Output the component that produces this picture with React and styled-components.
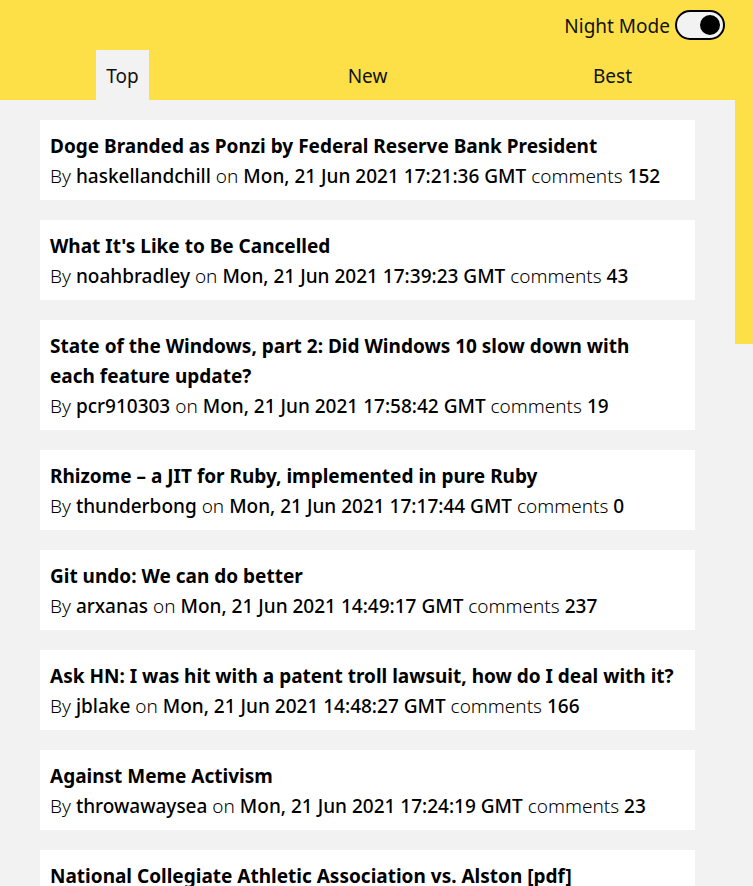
import React, { useState } from "react";
import styled, { createGlobalStyle } from "styled-components";

const stories = [
  { title: "Doge Branded as Ponzi by Federal Reserve Bank President", by: "haskellandchill", time: "Mon, 21 Jun 2021 17:21:36 GMT", comments: 152 },
  { title: "What It's Like to Be Cancelled", by: "noahbradley", time: "Mon, 21 Jun 2021 17:39:23 GMT", comments: 43 },
  { title: "State of the Windows, part 2: Did Windows 10 slow down with each feature update?", by: "pcr910303", time: "Mon, 21 Jun 2021 17:58:42 GMT", comments: 19 },
  { title: "Rhizome – a JIT for Ruby, implemented in pure Ruby", by: "thunderbong", time: "Mon, 21 Jun 2021 17:17:44 GMT", comments: 0 },
  { title: "Git undo: We can do better", by: "arxanas", time: "Mon, 21 Jun 2021 14:49:17 GMT", comments: 237 },
  { title: "Ask HN: I was hit with a patent troll lawsuit, how do I deal with it?", by: "jblake", time: "Mon, 21 Jun 2021 14:48:27 GMT", comments: 166 },
  { title: "Against Meme Activism", by: "throwawaysea", time: "Mon, 21 Jun 2021 17:24:19 GMT", comments: 23 },
  { title: "National Collegiate Athletic Association vs. Alston [pdf]", by: "luu", time: "Mon, 21 Jun 2021 14:31:05 GMT", comments: 88 },
];

function App() {
  const [night, setNight] = useState(true);
  const [tab, setTab] = useState("Top");

  return (
    <>
      <GlobalStyle />
      <Page>
        <Main>
          <Header>
            <TopBar>
              <ModeLabel>Night Mode</ModeLabel>
              <Toggle $on={night} onClick={() => setNight(!night)}>
                <Knob />
              </Toggle>
            </TopBar>
            <Tabs>
              {["Top", "New", "Best"].map((t) => (
                <TabCell key={t}>
                  <Tab $active={tab === t} onClick={() => setTab(t)}>
                    {t}
                  </Tab>
                </TabCell>
              ))}
            </Tabs>
          </Header>
          <List>
            {stories.map((s, i) => (
              <Card key={i}>
                <Title>{s.title}</Title>
                <Meta>
                  <Label>By</Label> <Value>{s.by}</Value> <Label>on</Label>{" "}
                  <Value>{s.time}</Value> <Label>comments</Label>{" "}
                  <Value>{s.comments}</Value>
                </Meta>
              </Card>
            ))}
          </List>
        </Main>
        {/* scrollbars are hidden in the capture, so the rail is drawn */}
        <Rail>
          <Thumb />
        </Rail>
      </Page>
    </>
  );
}

const GlobalStyle = createGlobalStyle`
  body {
    margin: 0;
    background: #f2f2f2;
    font-family: "Noto Sans", "Open Sans", sans-serif;
    color: #000;
  }
`;

const Page = styled.div`
  display: flex;
  height: 100vh;
  overflow: hidden;
`;

const Main = styled.div`
  flex: 1;
  overflow-y: auto;
  scrollbar-width: none;
`;

const Rail = styled.div`
  width: 18px;
  flex-shrink: 0;
  background: #f2f2f2;
`;

const Thumb = styled.div`
  height: 344px;
  background: #fde047;
`;

const Header = styled.header`
  background: #fde047;
  height: 100px;
  display: flex;
  flex-direction: column;
`;

const TopBar = styled.div`
  height: 50px;
  display: flex;
  align-items: center;
  justify-content: flex-end;
  padding-right: 10px;
  gap: 5px;
`;

const ModeLabel = styled.span`
  font-size: 19px;
  color: #111;
  padding-top: 2px;
`;

const Toggle = styled.div`
  width: 50px;
  height: 30px;
  box-sizing: border-box;
  border: 2px solid #000;
  border-radius: 15px;
  background: #f2f2f2;
  display: flex;
  align-items: center;
  justify-content: ${(p) => (p.$on ? "flex-end" : "flex-start")};
  padding: 0 3px;
  cursor: pointer;
`;

const Knob = styled.div`
  width: 20px;
  height: 20px;
  border-radius: 50%;
  background: #000;
`;

const Tabs = styled.nav`
  flex: 1;
  display: grid;
  grid-template-columns: repeat(3, 1fr);
`;

const TabCell = styled.div`
  display: flex;
  justify-content: center;
`;

const Tab = styled.button`
  border: none;
  font: inherit;
  font-size: 19px;
  color: #111;
  padding: 2px 10px 0;
  background: ${(p) => (p.$active ? "#f2f2f2" : "transparent")};
  cursor: pointer;
`;

const List = styled.main`
  display: flex;
  flex-direction: column;
  gap: 20px;
  padding: 20px 40px;
`;

const Card = styled.article`
  background: #fff;
  padding: 11px 20px 9px 10px;
`;

const Title = styled.h2`
  margin: 0;
  font-size: 19px;
  font-weight: 700;
  line-height: 30px;
`;

const Meta = styled.p`
  margin: 0;
  font-size: 19px;
  line-height: 30px;
`;

const Label = styled.span`
  font-weight: 300;
  color: #000;
`;

const Value = styled.span`
  font-weight: 500;
`;

export default App;
